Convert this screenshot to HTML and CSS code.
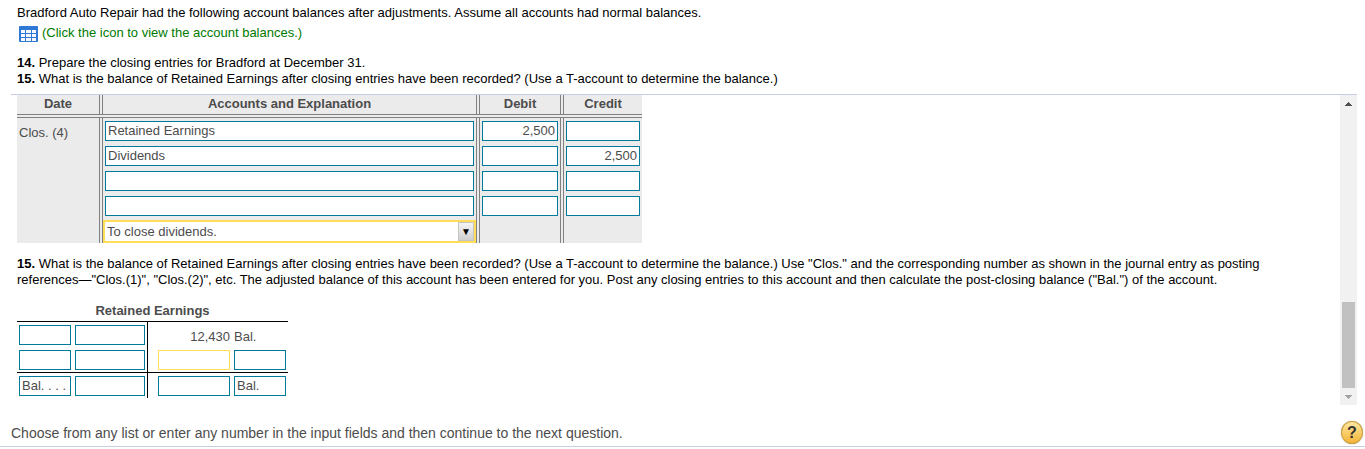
FILE: index.html
```
<!DOCTYPE html>
<html lang="en">
<head>
  <meta charset="UTF-8">
  <title>Bradford Auto Repair - Closing Entries</title>
  <meta name="viewport" content="width=device-width, initial-scale=1.0">
  <link rel="stylesheet" href="styles.css">
</head>
<body>

  <div class="question">
    <p>Bradford Auto Repair had the following account balances after adjustments. Assume all accounts had normal balances.</p>
    <a class="data-link" href="#balances">
      <svg width="19" height="16" viewBox="0 0 19 16" aria-hidden="true">
        <rect width="19" height="16" rx="1" fill="#2f78d4"/>
        <g fill="#f4f8fd">
          <rect x="2" y="4" width="4" height="3"/><rect x="7" y="4" width="5" height="3"/><rect x="13" y="4" width="4" height="3"/>
          <rect x="2" y="8" width="4" height="3"/><rect x="7" y="8" width="5" height="3"/><rect x="13" y="8" width="4" height="3"/>
          <rect x="2" y="12" width="4" height="3"/><rect x="7" y="12" width="5" height="3"/><rect x="13" y="12" width="4" height="3"/>
        </g>
      </svg>
      <span>(Click the icon to view the account balances.)</span>
    </a>
    <p><b>14.</b> Prepare the closing entries for Bradford at December 31.</p>
    <p><b>15.</b> What is the balance of Retained Earnings after closing entries have been recorded? (Use a T-account to determine the balance.)</p>
  </div>

  <div class="answer-pane">
    <div class="answer-content">

      <table class="journal">
        <colgroup>
          <col class="col-date"><col class="col-account"><col class="col-debit"><col class="col-credit">
        </colgroup>
        <thead>
          <tr><th>Date</th><th>Accounts and Explanation</th><th>Debit</th><th>Credit</th></tr>
        </thead>
        <tbody>
          <tr>
            <td class="date" rowspan="5">Clos. (4)</td>
            <td><input type="text" aria-label="Account 1" value="Retained Earnings"></td>
            <td><input type="text" class="num" aria-label="Debit 1" value="2,500"></td>
            <td><input type="text" class="num" aria-label="Credit 1"></td>
          </tr>
          <tr>
            <td><input type="text" aria-label="Account 2" value="Dividends"></td>
            <td><input type="text" class="num" aria-label="Debit 2"></td>
            <td><input type="text" class="num" aria-label="Credit 2" value="2,500"></td>
          </tr>
          <tr>
            <td><input type="text" aria-label="Account 3"></td>
            <td><input type="text" class="num" aria-label="Debit 3"></td>
            <td><input type="text" class="num" aria-label="Credit 3"></td>
          </tr>
          <tr>
            <td><input type="text" aria-label="Account 4"></td>
            <td><input type="text" class="num" aria-label="Debit 4"></td>
            <td><input type="text" class="num" aria-label="Credit 4"></td>
          </tr>
          <tr>
            <td class="explanation">
              <div class="select-box">
                <select aria-label="Explanation">
                  <option>To close dividends.</option>
                </select>
                <span class="select-arrow" aria-hidden="true">▼</span>
              </div>
            </td>
            <td></td>
            <td></td>
          </tr>
        </tbody>
      </table>

      <p class="instructions"><b>15.</b> What is the balance of Retained Earnings after closing entries have been recorded? (Use a T-account to determine the balance.) Use "Clos." and the corresponding number as shown in the journal entry as posting references—"Clos.(1)", "Clos.(2)", etc. The adjusted balance of this account has been entered for you. Post any closing entries to this account and then calculate the post-closing balance ("Bal.") of the account.</p>

      <table class="t-account">
        <colgroup>
          <col class="col-ref"><col class="col-left"><col class="col-right"><col class="col-ref">
        </colgroup>
        <thead>
          <tr><th colspan="4">Retained Earnings</th></tr>
        </thead>
        <tbody>
          <tr>
            <td><input type="text" aria-label="Debit reference 1"></td>
            <td class="left"><input type="text" class="num" aria-label="Debit amount 1"></td>
            <td class="right amount">12,430</td>
            <td class="label">Bal.</td>
          </tr>
          <tr>
            <td><input type="text" aria-label="Debit reference 2"></td>
            <td class="left"><input type="text" class="num" aria-label="Debit amount 2"></td>
            <td class="right"><input type="text" class="num active" aria-label="Credit amount 2"></td>
            <td><input type="text" aria-label="Credit reference 2"></td>
          </tr>
          <tr class="total">
            <td><input type="text" aria-label="Debit balance reference" value="Bal. . . ."></td>
            <td class="left"><input type="text" class="num" aria-label="Debit balance"></td>
            <td class="right"><input type="text" class="num" aria-label="Credit balance"></td>
            <td><input type="text" aria-label="Credit balance reference" value="Bal."></td>
          </tr>
        </tbody>
      </table>
    </div>

    <div class="scrollbar">
      <button type="button" aria-label="Scroll up">
        <svg width="7" height="4" viewBox="0 0 7 4"><path d="M3 0h1v1h1v1h1v1h1v1H0V3h1V2h1V1h1z" fill="#505050"/></svg>
      </button>
      <div class="track"><div class="thumb"></div></div>
      <button type="button" aria-label="Scroll down">
        <svg width="7" height="4" viewBox="0 0 7 4"><path d="M0 0h7v1H6v1H5v1H4v1H3V3H2V2H1V1H0z" fill="#a3a3a3"/></svg>
      </button>
    </div>
  </div>

  <div class="footer">
    <span>Choose from any list or enter any number in the input fields and then continue to the next question.</span>
    <button type="button" class="help" aria-label="Help">?</button>
  </div>

</body>
</html>
```
FILE: styles.css
```
:root {
  --field: #007a9b;
  --active: #ffdf57;
  --text: #4c4c4c;
  --rule: #c9cfe2;
  --grid: #808080;
}

* {
  box-sizing: border-box;
}

body {
  margin: 0;
  font-family: Arial, "Liberation Sans", sans-serif;
  font-size: 13px;
  line-height: 16px;
  color: #000;
  background: #fff;
}

p {
  margin: 0;
}

.question {
  padding: 5px 17px 7px;
}

.data-link {
  display: flex;
  align-items: flex-start;
  gap: 4px;
  margin: 4px 0 13px 2px;
  color: #007a00;
  text-decoration: none;
}

.data-link svg {
  margin-top: 1px;
}

.answer-pane {
  display: flex;
  margin: 0 8px 0 11px;
  border-top: 1px solid var(--rule);
}

.answer-content {
  flex: 1;
  padding: 0 20px 7px 6px;
}

table {
  table-layout: fixed;
  color: var(--text);
}

td, th {
  padding: 3px 2px 2px;
  vertical-align: top;
}

input,
select {
  display: block;
  width: 100%;
  height: 20px;
  margin: 0;
  padding: 0 2px 2px;
  border: 1px solid var(--field);
  border-radius: 0;
  background: #fff;
  color: var(--text);
  font: inherit;
  outline: none;
}

.num {
  text-align: right;
}

.active {
  border-color: var(--active);
}

/* journal entry */
.journal {
  width: 625px;
  border-collapse: collapse;
  background: #ebebeb;
}

.col-date { width: 84px; }
.col-account { width: 377px; }
.col-debit { width: 84px; }
.col-credit { width: 80px; }

.journal th {
  padding: 1px 2px 2px;
  border-bottom: 4px double var(--grid);
}

.journal th + th,
.journal td:not(.date) {
  border-left: 4px double var(--grid);
}

.journal .date {
  padding-top: 7px;
}

.journal .explanation {
  padding: 2px 0 0;
}

.select-box {
  position: relative;
}

.select-box select {
  height: 23px;
  padding: 0 2px;
  border: 2px solid var(--active);
  appearance: none;
}

.select-arrow {
  position: absolute;
  top: 2px;
  right: 2px;
  width: 16px;
  height: 19px;
  border: 1px solid #c4c4c4;
  background: linear-gradient(#f4f4f4, #cfcfcf);
  color: #000;
  font-size: 10px;
  line-height: 18px;
  text-align: center;
  pointer-events: none;
}

.instructions {
  margin: 13px 0 15px;
}

/* T-account */
.t-account {
  width: 271px;
  border-spacing: 0;
}

.col-ref { width: 56px; }
.col-left { width: 75px; }
.col-right { width: 84px; }

.t-account th {
  padding: 0 0 2px;
  border-bottom: 1px solid #000;
}

.t-account .left {
  border-right: 1px solid #000;
}

.t-account .right {
  padding-left: 10px;
}

.t-account .amount,
.t-account .label {
  padding-top: 7px;
}

.t-account .amount {
  text-align: right;
}

.total td {
  border-top: 1px solid #000;
}

/* scrollbar */
.scrollbar {
  display: flex;
  flex-direction: column;
  width: 17px;
  background: #f1f1f1;
}

.scrollbar button {
  display: flex;
  align-items: center;
  justify-content: center;
  height: 17px;
  padding: 0;
  border: none;
  background: none;
}

.track {
  display: flex;
  flex: 1;
  flex-direction: column;
  justify-content: flex-end;
  padding: 0 2px;
}

.thumb {
  height: 31%;
  background: #c1c1c1;
}

/* footer */
.footer {
  display: flex;
  align-items: center;
  justify-content: space-between;
  padding: 16px 2px 2px 11px;
  border-bottom: 1px solid var(--rule);
  color: var(--text);
  font-size: 14px;
}

.help {
  width: 22px;
  height: 23px;
  padding: 0;
  border: 1px solid #c9a03c;
  border-radius: 50%;
  background: linear-gradient(#ffe7a0, #f3b536);
  box-shadow: 0 0 1px #8a7a50;
  color: #333;
  font: bold 16px/20px Arial, "Liberation Sans", sans-serif;
}
```
